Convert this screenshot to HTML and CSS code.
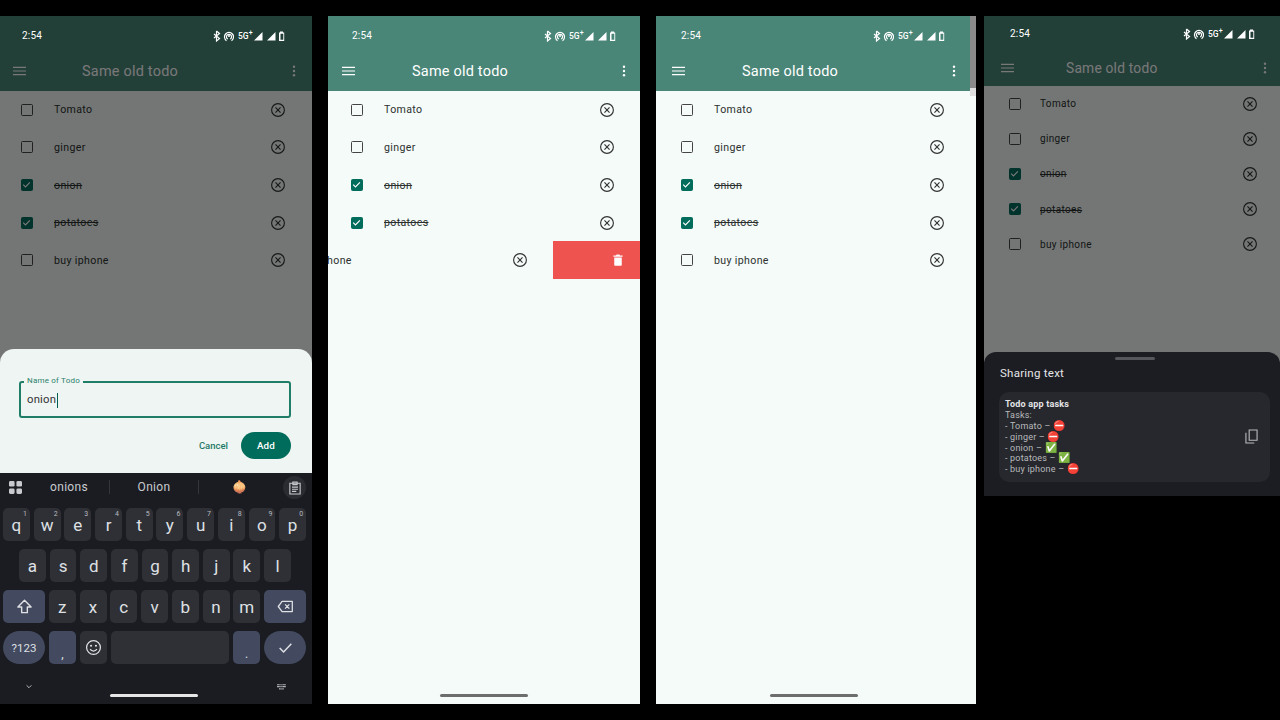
FILE: index.html

```html
<!DOCTYPE html>
<html>
<head>
  <title>Same old todo</title>
  <link rel="stylesheet" href="styles.css">
</head>
<body>

  <svg class="defs" width="0" height="0">
    <symbol id="ic-x" viewBox="0 0 24 24">
      <circle cx="12" cy="12" r="9.6" fill="none" stroke="currentColor" stroke-width="1.7"/>
      <path d="M8.2 8.2l7.6 7.6M15.8 8.2l-7.6 7.6" fill="none" stroke="currentColor" stroke-width="1.7"/>
    </symbol>
    <symbol id="ic-menu" viewBox="0 0 14 10">
      <path d="M0 1h14M0 5h14M0 9h14" fill="none" stroke="currentColor" stroke-width="1.3"/>
    </symbol>
    <symbol id="ic-more" viewBox="0 0 4 14">
      <circle cx="2" cy="2" r="1.4"/><circle cx="2" cy="7" r="1.4"/><circle cx="2" cy="12" r="1.4"/>
    </symbol>
    <symbol id="ic-check" viewBox="0 0 14 14">
      <path d="M2.8 7.2l2.9 2.9 5.6-5.8" fill="none" stroke="currentColor" stroke-width="1.5"/>
    </symbol>
    <symbol id="ic-bt-hotspot" viewBox="0 0 21 12">
      <path d="M3.5 1v10l3-2.5-5.5-4.500M3.500 1l3 2.500-5.500 4.500" fill="none" stroke="currentColor" stroke-width="1.2"/>
      <path d="M13.500 10.500a4.500 4.500 0 1 1 5 0M14.800 8.800a2.500 2.500 0 1 1 2.400 0" fill="none" stroke="currentColor" stroke-width="1.2" transform="translate(0 .2)"/>
      <circle cx="16" cy="6" r="1"/>
    </symbol>
    <symbol id="ic-signal" viewBox="0 0 31 12">
      <path d="M0 10.500l8.500-8.500v8.500zM13 10.500l8.500-8.500v8.500z"/>
      <path d="M26 2.500V1.500h3v1h1.200v8.500H25V2.500zm.5 1.200v6h2.800v-6z" fill-rule="evenodd"/>
    </symbol>
  </svg>

  <main class="strip">

    <section class="phone phone-a">
      <header class="appbar">
        <div class="statusbar">
          <span>2:54</span>
          <span class="status-icons"><svg class="st-left"><use href="#ic-bt-hotspot"/></svg><span class="st-net">5G<sup>+</sup></span><svg class="st-right"><use href="#ic-signal"/></svg></span>
        </div>
        <div class="toolbar">
          <svg class="ic-menu"><use href="#ic-menu"/></svg>
          <h1>Same old todo</h1>
          <svg class="ic-more"><use href="#ic-more"/></svg>
        </div>
      </header>
      <ul class="todos">
        <li><span class="box"></span><span class="name">Tomato</span><svg class="ic-x"><use href="#ic-x"/></svg></li>
        <li><span class="box"></span><span class="name">ginger</span><svg class="ic-x"><use href="#ic-x"/></svg></li>
        <li><span class="box on"><svg><use href="#ic-check"/></svg></span><span class="name done">onion</span><svg class="ic-x"><use href="#ic-x"/></svg></li>
        <li><span class="box on"><svg><use href="#ic-check"/></svg></span><span class="name done">potatoes</span><svg class="ic-x"><use href="#ic-x"/></svg></li>
        <li><span class="box"></span><span class="name">buy iphone</span><svg class="ic-x"><use href="#ic-x"/></svg></li>
      </ul>
      <div class="scrim"></div>
      <div class="bottom-stack">
        <div class="dialog">
          <div class="field">
            <span class="field-label">Name of Todo</span>
            <span class="field-value">onion</span><span class="caret"></span>
          </div>
          <div class="dialog-actions">
            <span class="btn-text">Cancel</span>
            <span class="btn-fill">Add</span>
          </div>
        </div>
        <div class="keyboard">
          <div class="suggest">
            <svg class="kb-grid" viewBox="0 0 14 14"><rect x="0" y="0" width="6" height="6" rx="1.5"/><rect x="8" y="0" width="6" height="6" rx="1.5"/><rect x="0" y="8" width="6" height="6" rx="1.5"/><rect x="8" y="8" width="6" height="6" rx="1.5"/></svg>
            <span class="sugg sugg-1">onions</span>
            <span class="sugg sugg-2">Onion</span>
            <span class="sugg sugg-3">🧅</span>
            <span class="clip"><svg viewBox="0 0 14 16"><path d="M1 2.5h12V15H1zM4.500 1h5v3h-5zM3.500 7h7M3.500 9.500h7M3.500 12h5" fill="none" stroke="currentColor" stroke-width="1.3"/></svg></span>
          </div>
          <div class="keys">
            <div class="key-row">
              <span class="key">q<sup>1</sup></span><span class="key">w<sup>2</sup></span><span class="key">e<sup>3</sup></span><span class="key">r<sup>4</sup></span><span class="key">t<sup>5</sup></span><span class="key">y<sup>6</sup></span><span class="key">u<sup>7</sup></span><span class="key">i<sup>8</sup></span><span class="key">o<sup>9</sup></span><span class="key">p<sup>0</sup></span>
            </div>
            <div class="key-row indent">
              <span class="key">a</span><span class="key">s</span><span class="key">d</span><span class="key">f</span><span class="key">g</span><span class="key">h</span><span class="key">j</span><span class="key">k</span><span class="key">l</span>
            </div>
            <div class="key-row">
              <span class="key wide accent"><svg class="kb-ic" viewBox="0 0 18 18"><path d="M9 2.5L2 9.500h4v6h6v-6h4z" fill="none" stroke="currentColor" stroke-width="1.5" stroke-linejoin="round"/></svg></span>
              <span class="key">z</span><span class="key">x</span><span class="key">c</span><span class="key">v</span><span class="key">b</span><span class="key">n</span><span class="key">m</span>
              <span class="key wide accent"><svg class="kb-ic" viewBox="0 0 20 16"><path d="M6 2h12v12H6L1.500 8zM9.500 5.500l5 5M14.500 5.500l-5 5" fill="none" stroke="currentColor" stroke-width="1.5" stroke-linejoin="round"/></svg></span>
            </div>
            <div class="key-row">
              <span class="key wide accent pill small">?123</span>
              <span class="key accent low">,</span>
              <span class="key"><svg class="kb-ic" viewBox="0 0 16 16"><circle cx="8" cy="8" r="6.5" fill="none" stroke="currentColor" stroke-width="1.2"/><circle cx="5.700" cy="6.300" r="1"/><circle cx="10.300" cy="6.300" r="1"/><path d="M4.800 9.600c1.600 2.300 4.800 2.300 6.400 0" fill="none" stroke="currentColor" stroke-width="1.2"/></svg></span>
              <span class="key space"></span>
              <span class="key accent low">.</span>
              <span class="key wide accent pill"><svg class="kb-ic" viewBox="0 0 16 16"><path d="M2.500 8.500l3.700 3.700 7.300-7.700" fill="none" stroke="currentColor" stroke-width="1.4"/></svg></span>
            </div>
          </div>
          <div class="kb-nav">
            <svg class="kb-down" viewBox="0 0 10 6"><path d="M1 1l4 4 4-4" fill="none" stroke="currentColor" stroke-width="1.3"/></svg>
            <span class="home-bar light"></span>
            <svg class="kb-small" viewBox="0 0 12 8"><path d="M0 1h12M0 3.500h12M3 6.500h6" fill="none" stroke="currentColor" stroke-width="1.5" stroke-dasharray="1 .6"/></svg>
          </div>
        </div>
      </div>
    </section>

    <section class="phone phone-b">
      <header class="appbar">
        <div class="statusbar">
          <span>2:54</span>
          <span class="status-icons"><svg class="st-left"><use href="#ic-bt-hotspot"/></svg><span class="st-net">5G<sup>+</sup></span><svg class="st-right"><use href="#ic-signal"/></svg></span>
        </div>
        <div class="toolbar">
          <svg class="ic-menu"><use href="#ic-menu"/></svg>
          <h1>Same old todo</h1>
          <svg class="ic-more"><use href="#ic-more"/></svg>
        </div>
      </header>
      <ul class="todos">
        <li><span class="box"></span><span class="name">Tomato</span><svg class="ic-x"><use href="#ic-x"/></svg></li>
        <li><span class="box"></span><span class="name">ginger</span><svg class="ic-x"><use href="#ic-x"/></svg></li>
        <li><span class="box on"><svg><use href="#ic-check"/></svg></span><span class="name done">onion</span><svg class="ic-x"><use href="#ic-x"/></svg></li>
        <li><span class="box on"><svg><use href="#ic-check"/></svg></span><span class="name done">potatoes</span><svg class="ic-x"><use href="#ic-x"/></svg></li>
        <li class="swiped">
          <span class="swipe-row"><span class="box"></span><span class="name">buy iphone</span><svg class="ic-x"><use href="#ic-x"/></svg></span>
          <span class="swipe-delete"><svg viewBox="0 0 12 14"><path d="M1.500 4h9v9a1 1 0 0 1-1 1h-7a1 1 0 0 1-1-1zM0.500 1.500h3l1-1h3l1 1h3V3h-11z"/></svg></span>
        </li>
      </ul>
      <span class="home-bar"></span>
    </section>

    <section class="phone phone-c">
      <header class="appbar">
        <div class="statusbar">
          <span>2:54</span>
          <span class="status-icons"><svg class="st-left"><use href="#ic-bt-hotspot"/></svg><span class="st-net">5G<sup>+</sup></span><svg class="st-right"><use href="#ic-signal"/></svg></span>
        </div>
        <div class="toolbar">
          <svg class="ic-menu"><use href="#ic-menu"/></svg>
          <h1>Same old todo</h1>
          <svg class="ic-more"><use href="#ic-more"/></svg>
        </div>
      </header>
      <ul class="todos">
        <li><span class="box"></span><span class="name">Tomato</span><svg class="ic-x"><use href="#ic-x"/></svg></li>
        <li><span class="box"></span><span class="name">ginger</span><svg class="ic-x"><use href="#ic-x"/></svg></li>
        <li><span class="box on"><svg><use href="#ic-check"/></svg></span><span class="name done">onion</span><svg class="ic-x"><use href="#ic-x"/></svg></li>
        <li><span class="box on"><svg><use href="#ic-check"/></svg></span><span class="name done">potatoes</span><svg class="ic-x"><use href="#ic-x"/></svg></li>
        <li><span class="box"></span><span class="name">buy iphone</span><svg class="ic-x"><use href="#ic-x"/></svg></li>
      </ul>
      <span class="home-bar"></span>
      <span class="edge-strip"></span>
    </section>

    <section class="phone phone-d">
      <header class="appbar">
        <div class="statusbar">
          <span>2:54</span>
          <span class="status-icons"><svg class="st-left"><use href="#ic-bt-hotspot"/></svg><span class="st-net">5G<sup>+</sup></span><svg class="st-right"><use href="#ic-signal"/></svg></span>
        </div>
        <div class="toolbar">
          <svg class="ic-menu"><use href="#ic-menu"/></svg>
          <h1>Same old todo</h1>
          <svg class="ic-more"><use href="#ic-more"/></svg>
        </div>
      </header>
      <ul class="todos">
        <li><span class="box"></span><span class="name">Tomato</span><svg class="ic-x"><use href="#ic-x"/></svg></li>
        <li><span class="box"></span><span class="name">ginger</span><svg class="ic-x"><use href="#ic-x"/></svg></li>
        <li><span class="box on"><svg><use href="#ic-check"/></svg></span><span class="name done">onion</span><svg class="ic-x"><use href="#ic-x"/></svg></li>
        <li><span class="box on"><svg><use href="#ic-check"/></svg></span><span class="name done">potatoes</span><svg class="ic-x"><use href="#ic-x"/></svg></li>
        <li><span class="box"></span><span class="name">buy iphone</span><svg class="ic-x"><use href="#ic-x"/></svg></li>
      </ul>
      <div class="scrim"></div>
      <div class="share-sheet">
        <span class="grip"></span>
        <h2>Sharing text</h2>
        <div class="share-card">
          <div class="share-body">
            <strong>Todo app tasks</strong>
            <p>Tasks:<br>- Tomato – <i>⛔</i><br>- ginger – <i>⛔</i><br>- onion – <i>✅</i><br>- potatoes – <i>✅</i><br>- buy iphone – <i>⛔</i></p>
          </div>
          <svg class="ic-copy" viewBox="0 0 14 16"><path d="M4.500 1h8.500v11H4.500zM1 4v11h9" fill="none" stroke="currentColor" stroke-width="1.2"/></svg>
        </div>
      </div>
    </section>

  </main>

</body>
</html>
```

FILE: styles.css

```css
* {
  box-sizing: border-box;
}
html, body {
  margin: 0;
  height: 100%;
}
body {
  background: #000;
  font-family: Roboto, "Noto Sans", sans-serif;
  overflow: hidden;
}
.defs {
  display: block;
  height: 0;
}
.strip {
  display: flex;
  align-items: flex-start;
  padding-top: 16px;
}

/* phones: the video frames are not quite the same scale, hence the variables */
.phone {
  --time-l: 24px;
  --icons-r: 24px;
  --menu-l: 14px;
  --title-l: 84px;
  --more-r: 14px;
  --box-l: 23px;
  --text-l: 56px;
  --x-r: 25px;
  --bar-h: 75px;
  --status-h: 37px;
  --toolbar-pb: 2px;
  --row-h: 37.65px;
  --title-size: 14.5px;
  --item-size: 10.6px;
  position: relative;
  height: 688px;
  overflow: hidden;
  background: #f4fbf9;
  display: flex;
  flex-direction: column;
}
.phone-a {
  --time-l: 22px;
  --icons-r: 27px;
  --menu-l: 13px;
  --title-l: 82px;
  --more-r: 16px;
  --box-l: 21px;
  --text-l: 54px;
  --x-r: 26.5px;
  width: 312px;
  margin-right: 16px;
}
.phone-b {
  width: 312px;
  margin-right: 16px;
}
.phone-c {
  --time-l: 25px;
  --icons-r: 31px;
  --menu-l: 16px;
  --title-l: 86px;
  --more-r: 20px;
  --box-l: 25px;
  --text-l: 58px;
  --x-r: 31px;
  width: 320px;
  margin-right: 8px;
}
.phone-d {
  --time-l: 26px;
  --icons-r: 25px;
  --menu-l: 17px;
  --title-l: 82px;
  --more-r: 13px;
  --box-l: 25px;
  --text-l: 56px;
  --x-r: 22px;
  --bar-h: 70px;
  --status-h: 33px;
  --toolbar-pb: 0px;
  --row-h: 35.2px;
  --title-size: 13.8px;
  --item-size: 10px;
  width: 296px;
  height: 480px;
}

/* app bar */
.appbar {
  height: var(--bar-h);
  background: #4a8678;
  color: #fff;
  flex: none;
}
.statusbar {
  position: relative;
  z-index: 2;
  height: var(--status-h);
  padding: 2px var(--icons-r) 0 var(--time-l);
  display: flex;
  align-items: center;
  justify-content: space-between;
  font-size: 10px;
  letter-spacing: 0.2px;
}
.status-icons {
  display: flex;
  align-items: center;
  fill: currentColor;
}
.st-left {
  width: 21px;
  height: 12px;
}
.st-right {
  width: 31px;
  height: 12px;
}
.st-net {
  width: 20px;
  padding-left: 4px;
  font-size: 8.5px;
  font-weight: 500;
  letter-spacing: 0;
}
.st-net sup {
  font-size: 7px;
  line-height: 0;
}
.toolbar {
  height: calc(var(--bar-h) - var(--status-h));
  display: flex;
  align-items: center;
  padding: 0 var(--more-r) var(--toolbar-pb) var(--menu-l);
}
.toolbar h1 {
  margin: 0 0 0 calc(var(--title-l) - var(--menu-l) - 13px);
  font-size: var(--title-size);
  font-weight: 400;
  letter-spacing: 0.2px;
  flex: 1;
}
.ic-menu {
  width: 13px;
  height: 10px;
  color: #fff;
}
.ic-more {
  width: 4px;
  height: 12px;
  fill: #fff;
}

/* list */
.todos {
  list-style: none;
  margin: 0;
  padding: 0;
}
.todos li {
  height: var(--row-h);
  display: flex;
  align-items: center;
  padding: 0 var(--x-r) 0 var(--box-l);
  color: #2c312f;
  font-size: var(--item-size);
  letter-spacing: 0.35px;
}
.box {
  width: 12px;
  height: 12px;
  border: 1.5px solid #444;
  border-radius: 1.5px;
  flex: none;
  margin-right: calc(var(--text-l) - var(--box-l) - 12px);
}
.box.on {
  background: #006c5b;
  border-color: #006c5b;
  color: #fff;
  display: flex;
}
.box.on svg {
  width: 11px;
  height: 11px;
  margin: -1px;
}
.name {
  flex: 1;
}
.done {
  text-decoration: line-through;
}
.ic-x {
  width: 16px;
  height: 16px;
  color: #333;
  flex: none;
}

/* swiped row */
.todos li.swiped {
  position: relative;
  padding: 0;
}
.swipe-row {
  display: flex;
  align-items: center;
  width: 100%;
  padding: 0 var(--x-r) 0 var(--box-l);
  transform: translateX(-87px);
}
.swipe-delete {
  position: absolute;
  right: 0;
  top: -1px;
  bottom: 0;
  width: 87px;
  background: #ef5350;
  display: flex;
  align-items: center;
  justify-content: flex-end;
  padding-right: 17px;
}
.swipe-delete svg {
  width: 10px;
  height: 12px;
  fill: #fff;
}

.home-bar {
  position: absolute;
  left: 50%;
  bottom: 7px;
  width: 88px;
  height: 3px;
  margin-left: -44px;
  border-radius: 2px;
  background: #6d6d6d;
}
.phone-c .home-bar {
  margin-left: -46px;
}
.home-bar.light {
  background: #e6e6e6;
  margin-left: -46px;
}
.edge-strip {
  position: absolute;
  top: 0;
  right: 0;
  width: 6px;
  height: 72px;
  background: #8a8a8a;
}
.edge-strip::after {
  content: "";
  position: absolute;
  left: 0;
  right: 0;
  top: 72px;
  height: 8px;
  background: #dedede;
}

/* dimmed background */
.scrim {
  position: absolute;
  inset: 0;
  background: rgba(0, 0, 0, 0.53);
}

/* add dialog + keyboard */
.bottom-stack {
  position: absolute;
  left: 0;
  right: 0;
  bottom: 0;
}
.dialog {
  height: 124px;
  background: #eff5f2;
  border-radius: 14px 14px 0 0;
  padding: 32px 21px 0 19px;
}
.field {
  position: relative;
  height: 37px;
  border: 2px solid #1f7d68;
  border-radius: 3px;
  padding: 10px 6px 0;
  font-size: 11.3px;
  color: #333;
  letter-spacing: 0.2px;
}
.field-label {
  position: absolute;
  top: -7px;
  left: 3px;
  padding: 0 3px;
  font-size: 8px;
  line-height: 10px;
  letter-spacing: 0.2px;
  color: #2b816c;
  background: #eff5f2;
}
.caret {
  display: inline-block;
  width: 1px;
  height: 15px;
  margin-left: 1px;
  vertical-align: middle;
  background: #00604f;
}
.dialog-actions {
  display: flex;
  justify-content: flex-end;
  align-items: center;
  margin-top: 14px;
}
.btn-text {
  font-size: 9.5px;
  font-weight: 500;
  color: #1e7a67;
  margin-right: 13px;
}
.btn-fill {
  width: 50px;
  height: 27px;
  border-radius: 14px;
  background: #006c5b;
  color: #fff;
  font-size: 9.8px;
  font-weight: 500;
  letter-spacing: 0.2px;
  display: flex;
  align-items: center;
  justify-content: center;
}

.keyboard {
  height: 231px;
  background: #1a1c22;
  color: #e4e4e8;
  fill: currentColor;
}
.suggest {
  height: 35px;
  position: relative;
  font-size: 12px;
  letter-spacing: 0.3px;
  color: #c9cacf;
}
.kb-grid {
  position: absolute;
  left: 9px;
  top: 8px;
  width: 13px;
  height: 13px;
}
.sugg {
  position: absolute;
  top: 7px;
  width: 90px;
  text-align: center;
}
.sugg-1 { left: 24px; }
.sugg-2 { left: 109px; border-left: 1px solid #33353b; border-right: 1px solid #33353b; }
.sugg-3 { left: 195px; }
.clip {
  position: absolute;
  right: 6px;
  top: 3px;
  width: 23px;
  height: 23px;
  border-radius: 50%;
  background: #2a2c32;
  display: flex;
  align-items: center;
  justify-content: center;
}
.clip svg {
  width: 12px;
  height: 14px;
}
.keys {
  padding: 0 6px 0 3px;
}
.key-row {
  display: flex;
  gap: 3.8px;
  height: 33px;
  margin-bottom: 8px;
}
.key-row.indent {
  padding: 0 15px 0 16px;
}
.key {
  position: relative;
  flex: 1;
  background: #2e3036;
  border-radius: 5px;
  font-size: 17px;
  display: flex;
  align-items: center;
  justify-content: center;
  color: #dfe0e4;
}
.key sup {
  position: absolute;
  top: 2px;
  right: 3px;
  font-size: 7px;
  line-height: 8px;
  color: #b8bac0;
}
.key.wide {
  flex: 0 0 42px;
}
.key.accent {
  background: #434a5f;
}
.key.pill {
  border-radius: 17px;
}
.key.small {
  font-size: 11.5px;
}
.key.low {
  font-size: 12px;
  padding-top: 12px;
}
.key.space {
  flex: 0 0 118px;
}
.kb-ic {
  width: 17px;
  height: 17px;
}
.kb-nav {
  position: relative;
  height: 32px;
}
.kb-down {
  position: absolute;
  left: 26px;
  top: 12px;
  width: 6px;
  height: 5px;
}
.kb-small {
  position: absolute;
  left: 276px;
  top: 12px;
  width: 11px;
  height: 6px;
}

/* share sheet */
.share-sheet {
  position: absolute;
  left: 0;
  right: 0;
  bottom: 0;
  height: 144px;
  background: #1b1d22;
  border-radius: 12px 12px 0 0;
  padding: 14px 10px 0 16px;
}
.grip {
  position: absolute;
  top: 5px;
  left: 50%;
  width: 40px;
  height: 3px;
  margin-left: -17px;
  border-radius: 2px;
  background: #55575c;
}
.share-sheet h2 {
  margin: 0;
  font-size: 11.5px;
  line-height: 15px;
  font-weight: 400;
  letter-spacing: 0.25px;
  color: #e6e6e8;
}
.share-card {
  margin: 11px 0 0 -1px;
  height: 90px;
  border-radius: 10px;
  background: #26282d;
  display: flex;
  align-items: center;
  justify-content: space-between;
  padding: 0 12px 1px 6px;
}
.share-body {
  font-size: 9px;
  color: #b9babd;
  letter-spacing: 0.2px;
}
.share-body strong {
  display: block;
  font-size: 9px;
  line-height: 12px;
  font-weight: 700;
  color: #e4e4e6;
}
.share-body p {
  margin: 0;
  line-height: 10.8px;
}
.share-body i {
  font-style: normal;
  font-size: 10px;
}
.ic-copy {
  width: 13px;
  height: 15px;
  color: #b9babd;
}
```
